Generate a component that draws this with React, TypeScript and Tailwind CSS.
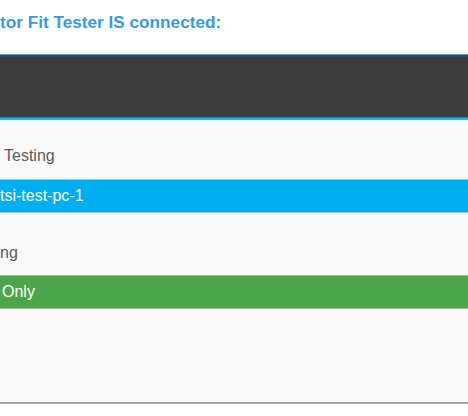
const font = { fontFamily: '"Liberation Sans", Arial, sans-serif' };

const App = () => {
  return (
    <div className="w-[468px] h-[416px] bg-white overflow-hidden" style={font}>
      <div className="h-[54px] pt-[12px]">
        <h1 className="text-[17.2px] leading-[20px] font-bold text-[#3a9ad9] whitespace-nowrap">
          tor Fit Tester IS connected:
        </h1>
      </div>

      <div className="flex flex-col">
        <div className="h-px bg-[#5d9fd5]" />
        <div className="h-[2px] bg-[#2d4b67]" />
        <div className="h-[60px] bg-[#3c3c3c]" />
        <div className="h-px bg-[#2a7fae]" />
        <div className="h-[2px] bg-[#34aee0]" />
        <div className="h-[2px] bg-[#e2f7fc]" />

        <div className="h-[280px] bg-[#fafafa] flex flex-col text-[16px] leading-[24px]">
          <div className="pt-[22px] pb-[11px] pl-1 text-[#5a5a5a] whitespace-nowrap">Testing</div>
          <div className="h-[34px] flex items-center bg-[#00adee] border-y border-[#7fd0f1] text-white whitespace-nowrap">
            tsi-test-pc-1
          </div>
          <div className="pt-[28px] pb-[10px] text-[#5a5a5a] whitespace-nowrap">ng</div>
          <div className="h-[34px] flex items-center pl-[2px] bg-[#4ca54a] border-y border-[#8fca8c] text-white whitespace-nowrap">
            Only
          </div>
        </div>
        <div className="h-[2px] bg-[#a3a3a3]" />
      </div>
    </div>
  );
};

export default App;
